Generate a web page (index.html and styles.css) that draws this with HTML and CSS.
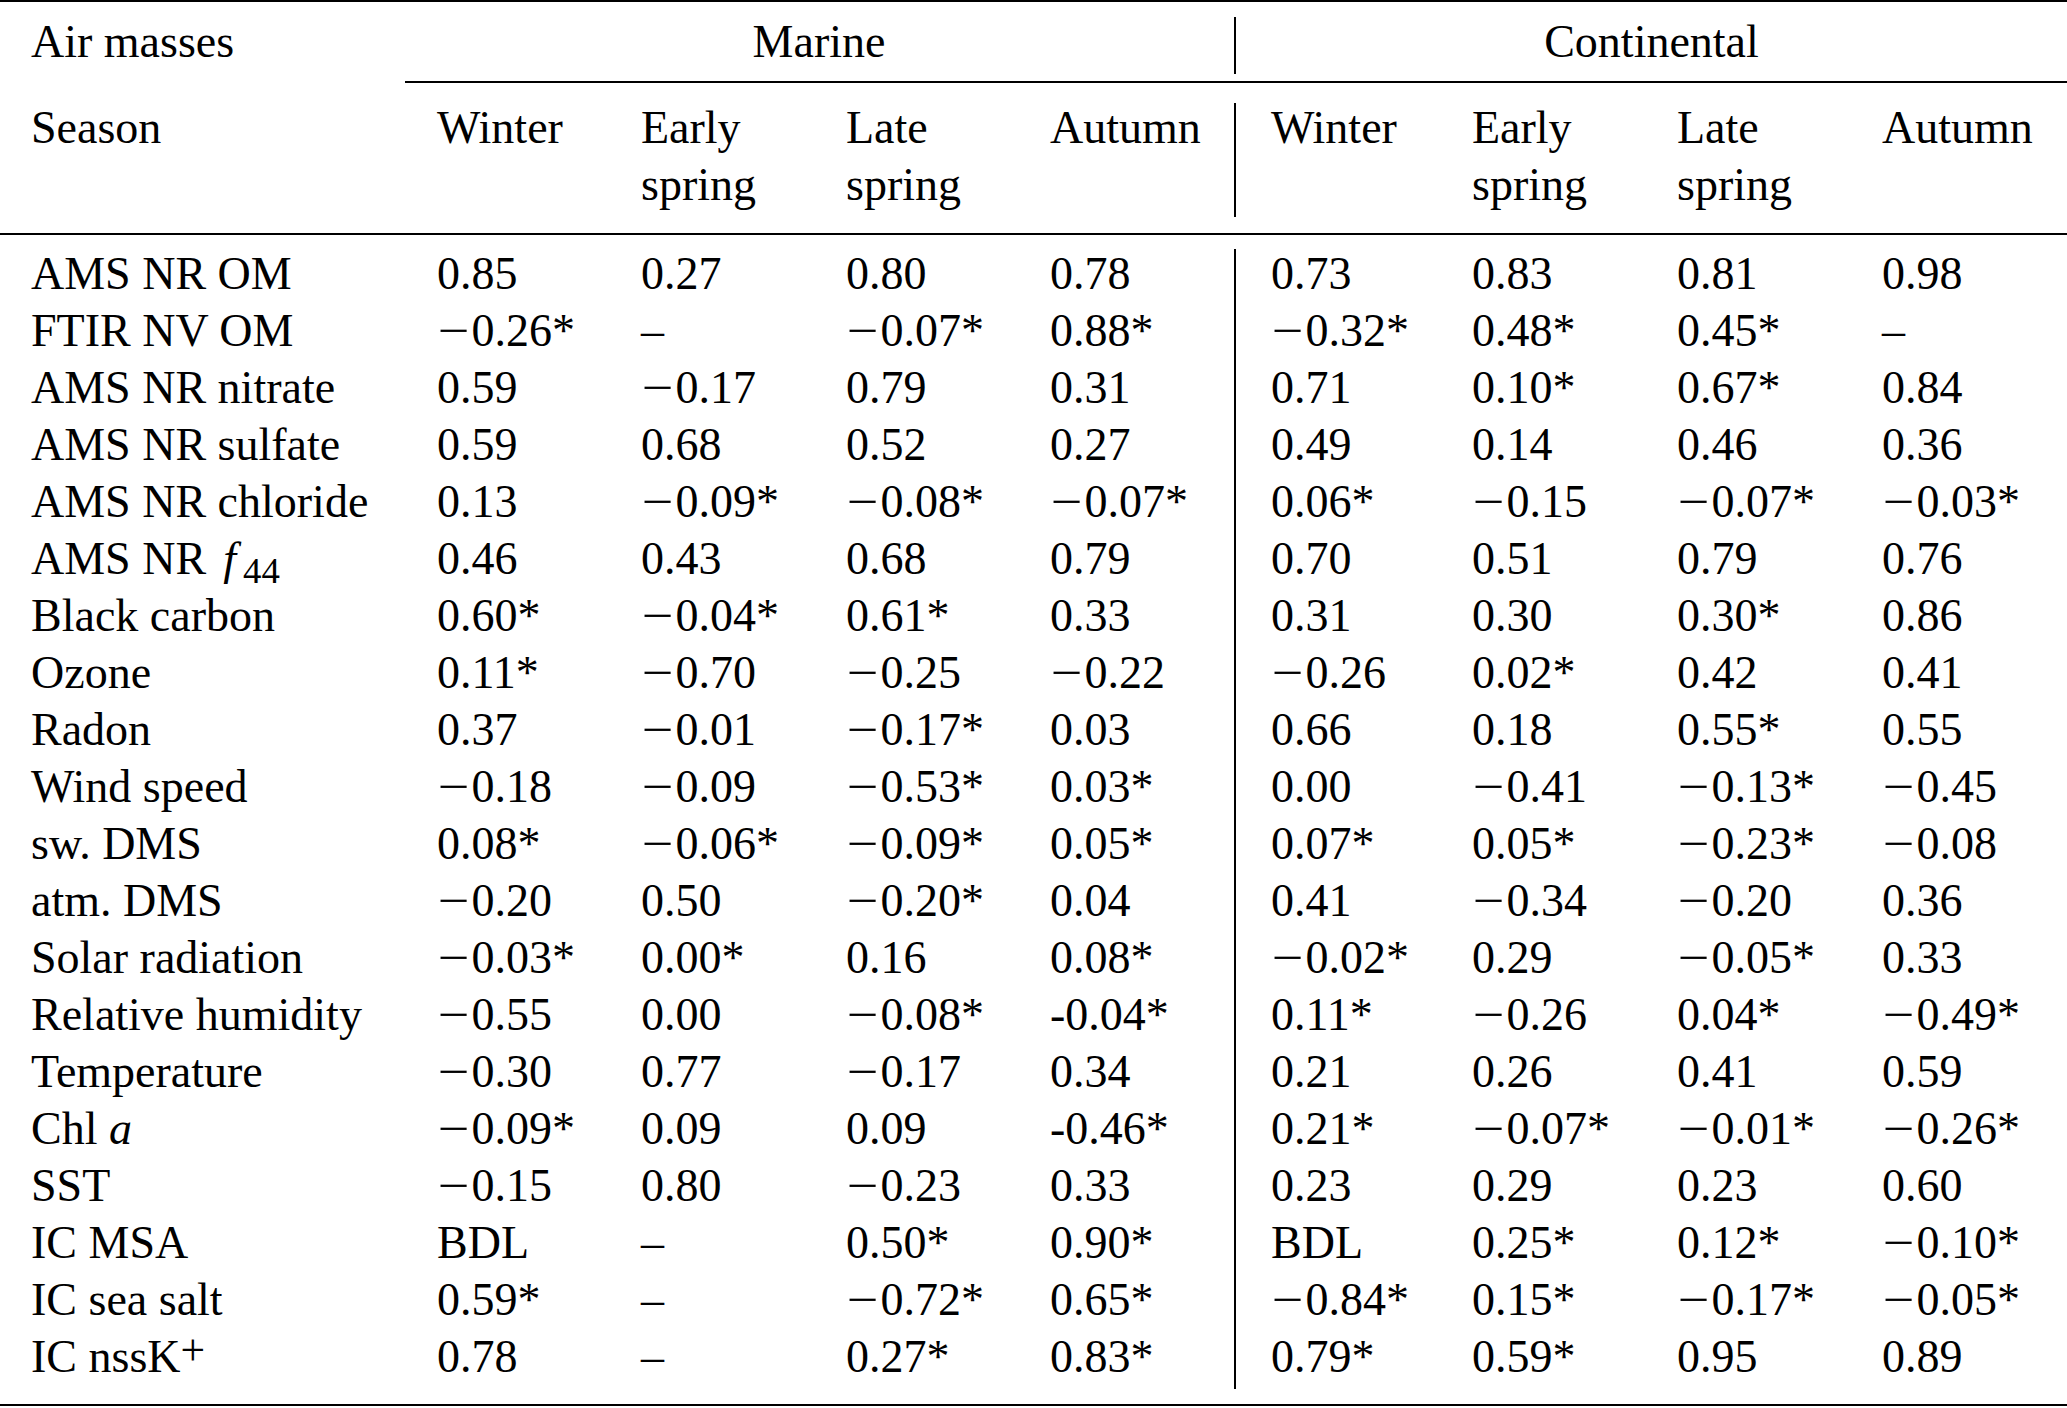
FILE: index.html
```html
<!DOCTYPE html>
<html lang="en">
<head>
<meta charset="utf-8">
<title>Correlation table</title>
<link rel="stylesheet" href="styles.css">
</head>
<body>
<div class="tbl">
  <div class="rule"></div>

  <div class="grid head1">
    <div class="c lbl">Air masses</div>
    <div class="grp grp-m">Marine</div>
    <div class="vl"></div>
    <div class="grp grp-c">Continental</div>
  </div>

  <div class="rule cmid"></div>

  <div class="grid head2">
    <div class="c lbl">Season</div>
    <div class="c">Winter</div>
    <div class="c">Early<br>spring</div>
    <div class="c">Late<br>spring</div>
    <div class="c">Autumn</div>
    <div class="vl"></div>
    <div class="c cw">Winter</div>
    <div class="c">Early<br>spring</div>
    <div class="c">Late<br>spring</div>
    <div class="c">Autumn</div>
  </div>

  <div class="rule mid"></div>

  <div class="body">
    <div class="grid row"><div class="c lbl">AMS NR OM</div><div class="c">0.85</div><div class="c">0.27</div><div class="c">0.80</div><div class="c">0.78</div><div class="vl"></div><div class="c cw">0.73</div><div class="c">0.83</div><div class="c">0.81</div><div class="c">0.98</div></div>
    <div class="grid row"><div class="c lbl">FTIR NV OM</div><div class="c"><span class="neg">−</span>0.26*</div><div class="c">–</div><div class="c"><span class="neg">−</span>0.07*</div><div class="c">0.88*</div><div class="vl"></div><div class="c cw"><span class="neg">−</span>0.32*</div><div class="c">0.48*</div><div class="c">0.45*</div><div class="c">–</div></div>
    <div class="grid row"><div class="c lbl">AMS NR nitrate</div><div class="c">0.59</div><div class="c"><span class="neg">−</span>0.17</div><div class="c">0.79</div><div class="c">0.31</div><div class="vl"></div><div class="c cw">0.71</div><div class="c">0.10*</div><div class="c">0.67*</div><div class="c">0.84</div></div>
    <div class="grid row"><div class="c lbl">AMS NR sulfate</div><div class="c">0.59</div><div class="c">0.68</div><div class="c">0.52</div><div class="c">0.27</div><div class="vl"></div><div class="c cw">0.49</div><div class="c">0.14</div><div class="c">0.46</div><div class="c">0.36</div></div>
    <div class="grid row"><div class="c lbl">AMS NR chloride</div><div class="c">0.13</div><div class="c"><span class="neg">−</span>0.09*</div><div class="c"><span class="neg">−</span>0.08*</div><div class="c"><span class="neg">−</span>0.07*</div><div class="vl"></div><div class="c cw">0.06*</div><div class="c"><span class="neg">−</span>0.15</div><div class="c"><span class="neg">−</span>0.07*</div><div class="c"><span class="neg">−</span>0.03*</div></div>
    <div class="grid row"><div class="c lbl">AMS NR <i class="mf">f</i><sub class="sb">44</sub></div><div class="c">0.46</div><div class="c">0.43</div><div class="c">0.68</div><div class="c">0.79</div><div class="vl"></div><div class="c cw">0.70</div><div class="c">0.51</div><div class="c">0.79</div><div class="c">0.76</div></div>
    <div class="grid row"><div class="c lbl">Black carbon</div><div class="c">0.60*</div><div class="c"><span class="neg">−</span>0.04*</div><div class="c">0.61*</div><div class="c">0.33</div><div class="vl"></div><div class="c cw">0.31</div><div class="c">0.30</div><div class="c">0.30*</div><div class="c">0.86</div></div>
    <div class="grid row"><div class="c lbl">Ozone</div><div class="c">0.11*</div><div class="c"><span class="neg">−</span>0.70</div><div class="c"><span class="neg">−</span>0.25</div><div class="c"><span class="neg">−</span>0.22</div><div class="vl"></div><div class="c cw"><span class="neg">−</span>0.26</div><div class="c">0.02*</div><div class="c">0.42</div><div class="c">0.41</div></div>
    <div class="grid row"><div class="c lbl">Radon</div><div class="c">0.37</div><div class="c"><span class="neg">−</span>0.01</div><div class="c"><span class="neg">−</span>0.17*</div><div class="c">0.03</div><div class="vl"></div><div class="c cw">0.66</div><div class="c">0.18</div><div class="c">0.55*</div><div class="c">0.55</div></div>
    <div class="grid row"><div class="c lbl">Wind speed</div><div class="c"><span class="neg">−</span>0.18</div><div class="c"><span class="neg">−</span>0.09</div><div class="c"><span class="neg">−</span>0.53*</div><div class="c">0.03*</div><div class="vl"></div><div class="c cw">0.00</div><div class="c"><span class="neg">−</span>0.41</div><div class="c"><span class="neg">−</span>0.13*</div><div class="c"><span class="neg">−</span>0.45</div></div>
    <div class="grid row"><div class="c lbl">sw. DMS</div><div class="c">0.08*</div><div class="c"><span class="neg">−</span>0.06*</div><div class="c"><span class="neg">−</span>0.09*</div><div class="c">0.05*</div><div class="vl"></div><div class="c cw">0.07*</div><div class="c">0.05*</div><div class="c"><span class="neg">−</span>0.23*</div><div class="c"><span class="neg">−</span>0.08</div></div>
    <div class="grid row"><div class="c lbl">atm. DMS</div><div class="c"><span class="neg">−</span>0.20</div><div class="c">0.50</div><div class="c"><span class="neg">−</span>0.20*</div><div class="c">0.04</div><div class="vl"></div><div class="c cw">0.41</div><div class="c"><span class="neg">−</span>0.34</div><div class="c"><span class="neg">−</span>0.20</div><div class="c">0.36</div></div>
    <div class="grid row"><div class="c lbl">Solar radiation</div><div class="c"><span class="neg">−</span>0.03*</div><div class="c">0.00*</div><div class="c">0.16</div><div class="c">0.08*</div><div class="vl"></div><div class="c cw"><span class="neg">−</span>0.02*</div><div class="c">0.29</div><div class="c"><span class="neg">−</span>0.05*</div><div class="c">0.33</div></div>
    <div class="grid row"><div class="c lbl">Relative humidity</div><div class="c"><span class="neg">−</span>0.55</div><div class="c">0.00</div><div class="c"><span class="neg">−</span>0.08*</div><div class="c">-0.04*</div><div class="vl"></div><div class="c cw">0.11*</div><div class="c"><span class="neg">−</span>0.26</div><div class="c">0.04*</div><div class="c"><span class="neg">−</span>0.49*</div></div>
    <div class="grid row"><div class="c lbl">Temperature</div><div class="c"><span class="neg">−</span>0.30</div><div class="c">0.77</div><div class="c"><span class="neg">−</span>0.17</div><div class="c">0.34</div><div class="vl"></div><div class="c cw">0.21</div><div class="c">0.26</div><div class="c">0.41</div><div class="c">0.59</div></div>
    <div class="grid row"><div class="c lbl">Chl <i class="mi">a</i></div><div class="c"><span class="neg">−</span>0.09*</div><div class="c">0.09</div><div class="c">0.09</div><div class="c">-0.46*</div><div class="vl"></div><div class="c cw">0.21*</div><div class="c"><span class="neg">−</span>0.07*</div><div class="c"><span class="neg">−</span>0.01*</div><div class="c"><span class="neg">−</span>0.26*</div></div>
    <div class="grid row"><div class="c lbl">SST</div><div class="c"><span class="neg">−</span>0.15</div><div class="c">0.80</div><div class="c"><span class="neg">−</span>0.23</div><div class="c">0.33</div><div class="vl"></div><div class="c cw">0.23</div><div class="c">0.29</div><div class="c">0.23</div><div class="c">0.60</div></div>
    <div class="grid row"><div class="c lbl">IC MSA</div><div class="c">BDL</div><div class="c">–</div><div class="c">0.50*</div><div class="c">0.90*</div><div class="vl"></div><div class="c cw">BDL</div><div class="c">0.25*</div><div class="c">0.12*</div><div class="c"><span class="neg">−</span>0.10*</div></div>
    <div class="grid row"><div class="c lbl">IC sea salt</div><div class="c">0.59*</div><div class="c">–</div><div class="c"><span class="neg">−</span>0.72*</div><div class="c">0.65*</div><div class="vl"></div><div class="c cw"><span class="neg">−</span>0.84*</div><div class="c">0.15*</div><div class="c"><span class="neg">−</span>0.17*</div><div class="c"><span class="neg">−</span>0.05*</div></div>
    <div class="grid row"><div class="c lbl">IC nssK<sup class="sp">+</sup></div><div class="c">0.78</div><div class="c">–</div><div class="c">0.27*</div><div class="c">0.83*</div><div class="vl"></div><div class="c cw">0.79*</div><div class="c">0.59*</div><div class="c">0.95</div><div class="c">0.89</div></div>
  </div>

  <div class="rule bottom"></div>
</div>
</body>
</html>
```

FILE: styles.css
```css
html, body {
  margin: 0;
  padding: 0;
  background: #ffffff;
}

body {
  font-family: "Liberation Serif", "Times New Roman", serif;
  font-size: 46px;
  color: #000000;
}

.tbl {
  width: 2067px;
}

.rule {
  height: 2px;
  background: #000000;
}

.cmid {
  margin-top: 11px;
  margin-left: 405px;
}

.mid {
  margin-top: 20px;
}

.bottom {
  margin-top: 19px;
}

.grid {
  display: grid;
  grid-template-columns: 404px 204px 205px 204px 217px 2px 203px 205px 205px 218px;
  line-height: 57px;
}

.head1 {
  margin-top: 11px;
}

.head2 {
  margin-top: 16px;
}

.body {
  margin-top: 10px;
}

.c {
  padding-left: 33px;
  white-space: nowrap;
}

.lbl {
  padding-left: 31px;
}

.cw {
  padding-left: 35px;
}

.grp {
  text-align: center;
}

.grp-m {
  grid-column: 2 / 6;
}

.grp-c {
  grid-column: 7 / 11;
}

.vl {
  background: #000000;
  margin: 4px 0 -4px;
}

.neg {
  display: inline-block;
  margin-left: 0.02em;
  margin-right: 0.168em;
  transform: scaleX(1.22);
  transform-origin: left center;
}

.mf {
  margin-left: 0.12em;
  margin-right: 0.06em;
}

.mi {
  font-style: italic;
}

.sb {
  font-size: 0.8em;
  line-height: 0;
  vertical-align: -9px;
  margin-left: 0.12em;
}

.sp {
  font-size: 0.95em;
  line-height: 0;
  vertical-align: 7px;
}
```
